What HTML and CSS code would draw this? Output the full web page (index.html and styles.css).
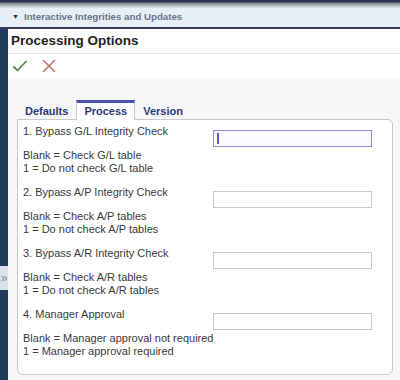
FILE: index.html
```html
<!DOCTYPE html>
<html lang="en">
<head>
  <meta charset="UTF-8" />
  <title>Processing Options</title>
  <link rel="stylesheet" href="styles.css">
</head>
<body>

  <!-- SECTION HEADER -->
  <header class="topbar">
    <div class="topbar-edge"></div>
    <div class="section-header">
      <span class="caret">&#9660;</span>
      <span>Interactive Integrities and Updates</span>
    </div>
  </header>

  <div class="layout">
    <!-- LEFT RAIL -->
    <aside class="rail">
      <div class="rail-handle">&raquo;</div>
    </aside>

    <!-- PANEL -->
    <section class="panel">
      <h1 class="panel-title">Processing Options</h1>

      <div class="toolbar">
        <svg class="tool-icon" viewBox="0 0 16 16" width="16" height="16">
          <polyline points="1.5,8.5 5.5,12.5 14.5,3" fill="none" stroke="#5b8a4c" stroke-width="1.8" />
        </svg>
        <svg class="tool-icon" viewBox="0 0 16 16" width="16" height="16">
          <path d="M2 2 L14 14 M14 2 L2 14" fill="none" stroke="#b87662" stroke-width="1.6" />
        </svg>
      </div>

      <div class="tabs">
        <a class="tab">Defaults</a>
        <a class="tab active">Process</a>
        <a class="tab">Version</a>
      </div>

      <div class="options">
        <div class="option">
          <div class="option-text">
            <p class="option-title">1. Bypass G/L Integrity Check</p>
            <p class="option-desc">Blank = Check G/L table<br>1 = Do not check G/L table</p>
          </div>
          <div class="option-field focused"><span class="cursor"></span></div>
        </div>
        <div class="option">
          <div class="option-text">
            <p class="option-title">2. Bypass A/P Integrity Check</p>
            <p class="option-desc">Blank = Check A/P tables<br>1 = Do not check A/P tables</p>
          </div>
          <div class="option-field"></div>
        </div>
        <div class="option">
          <div class="option-text">
            <p class="option-title">3. Bypass A/R Integrity Check</p>
            <p class="option-desc">Blank = Check A/R tables<br>1 = Do not check A/R tables</p>
          </div>
          <div class="option-field"></div>
        </div>
        <div class="option">
          <div class="option-text">
            <p class="option-title">4. Manager Approval</p>
            <p class="option-desc">Blank = Manager approval not required<br>1 = Manager approval required</p>
          </div>
          <div class="option-field"></div>
        </div>
      </div>
    </section>
  </div>

</body>
</html>
```

FILE: styles.css
```css
/* VARIABLES */
:root {
  --navy: #363c5c;
  --rail: #1f3c5c;
  --tab-text: #2b3a7c;
  --tab-accent: #4a50b8;
  --text: #3a3a3a;
  --border: #c9c9c9;
  --font: "Liberation Sans", Arial, sans-serif;
}

/* RESET */
*, *::before, *::after { box-sizing: border-box; margin: 0; padding: 0; }
body {
  font-family: var(--font);
  color: var(--text);
  background: #f6f7f9;
  width: 400px;
  height: 380px;
  overflow: hidden;
}
a { text-decoration: none; color: inherit; cursor: pointer; }

/* SECTION HEADER */
.topbar { height: 29px; }
.topbar-edge {
  height: 8px;
  background: linear-gradient(#2e3452 0, #2e3452 2px, #7d8a88 3px, #b9c2c4 6px, #dde4ea 8px);
}
.section-header {
  height: 21px;
  display: flex;
  align-items: center;
  gap: 5px;
  padding-left: 12px;
  padding-bottom: 3px;
  background: #e8eef5;
  border-bottom: 2px solid var(--navy);
  font-size: 9.7px;
  font-weight: bold;
  color: #66768a;
}
.caret { font-size: 7px; color: #333; }

/* LAYOUT */
.layout {
  display: flex;
  height: 351px;
}
.rail {
  width: 8px;
  background: var(--rail);
  position: relative;
}
.rail-handle {
  position: absolute;
  top: 237px; left: 0;
  width: 8px; height: 24px;
  background: #d8e2e8;
  color: #7d8e9c;
  font-size: 12px;
  line-height: 24px;
  text-align: center;
}
.panel {
  flex: 1;
  display: flex;
  flex-direction: column;
}
.panel > * { flex-shrink: 0; }

/* TITLE + TOOLBAR */
.panel-title {
  height: 25px;
  padding-left: 3px;
  background: #fff;
  border-bottom: 1px solid #e6e6e6;
  font-size: 13.5px;
  font-weight: bold;
  line-height: 24px;
  color: #222;
}
.toolbar {
  height: 24px;
  display: flex;
  align-items: center;
  gap: 13px;
  padding-left: 4px;
  background: #fff;
}

/* TABS */
.tabs {
  display: flex;
  align-items: flex-end;
  height: 41px;
  padding-left: 9px;
  position: relative;
  z-index: 1;
}
.tab {
  font-size: 11px;
  font-weight: bold;
  color: var(--tab-text);
  padding: 2px 7px 1px;
  line-height: 13px;
  border: 1px solid transparent;
  border-top: 3px solid transparent;
  border-bottom: none;
}
.tab.active {
  background: #fff;
  border-color: var(--border);
  border-top-color: var(--tab-accent);
  margin-bottom: -1px;
  padding-bottom: 2px;
}

/* OPTIONS BOX */
.options {
  margin: 0 7px 5px 9px;
  flex: 1;
  background: #fff;
  border: 1px solid var(--border);
  border-radius: 0 5px 6px 6px;
  padding: 5px 0 0 5px;
}
.option {
  display: grid;
  grid-template-columns: 190px 159px;
  padding-bottom: 11px;
  font-size: 11px;
  line-height: 13px;
  white-space: nowrap;
}
.option-desc { margin-top: 11px; }
.option-field {
  margin-top: 5px;
  height: 17px;
  border: 1px solid #c8c8c8;
  background: #fff;
}
.option-field.focused {
  border-color: #8c8ce0;
  background: #fafbff;
  padding: 2px 3px;
}
.cursor {
  display: block;
  width: 2px;
  height: 11px;
  background: #5a5ad0;
}
```
